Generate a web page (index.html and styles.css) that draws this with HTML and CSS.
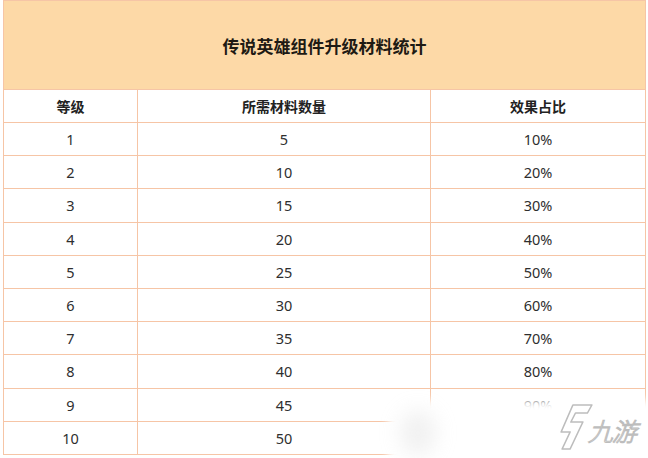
FILE: index.html
```html
<!DOCTYPE html>
<html lang="zh">
<head>
<meta charset="utf-8">
<link rel="stylesheet" href="styles.css">
</head>
<body>
<div class="wrap">
<table class="stats">
  <colgroup><col class="c1"><col class="c2"><col class="c3"></colgroup>
  <thead>
    <tr><th colspan="3" class="title">传说英雄组件升级材料统计</th></tr>
    <tr class="head"><th>等级</th><th>所需材料数量</th><th>效果占比</th></tr>
  </thead>
  <tbody>
    <tr><td>1</td><td>5</td><td>10%</td></tr>
    <tr><td>2</td><td>10</td><td>20%</td></tr>
    <tr><td>3</td><td>15</td><td>30%</td></tr>
    <tr><td>4</td><td>20</td><td>40%</td></tr>
    <tr><td>5</td><td>25</td><td>50%</td></tr>
    <tr><td>6</td><td>30</td><td>60%</td></tr>
    <tr><td>7</td><td>35</td><td>70%</td></tr>
    <tr><td>8</td><td>40</td><td>80%</td></tr>
    <tr><td>9</td><td>45</td><td>90%</td></tr>
    <tr><td>10</td><td>50</td><td>100%</td></tr>
  </tbody>
</table>
<div class="patch"></div>
<div class="shade"></div>
<div class="mark">
  <svg class="logo" width="30" height="50" viewBox="0 0 30 50">
    <path d="M9 3 L28 3 L25 11 L13 11 L10 20 L22 20 L14 47 L6 47 L11 30 L2 30 Z" fill="#ffffff" stroke="#bdbdbd" stroke-width="1.6" stroke-linejoin="round"/>
  </svg>
  <span class="brand">九游</span>
</div>
</div>
</body>
</html>
```
FILE: styles.css
```css
html, body {
  margin: 0;
  padding: 0;
  background: #ffffff;
}
.wrap {
  position: relative;
  width: 648px;
  height: 458px;
  overflow: hidden;
}
.stats {
  margin-left: 3px;
  width: 642px;
  border-collapse: collapse;
  table-layout: fixed;
  font-family: "Noto Sans", "Noto Sans CJK SC", sans-serif;
  color: #222;
}
.c1 { width: 134px; }
.c2 { width: 293px; }
.c3 { width: 215px; }
.stats th, .stats td {
  border: 1px solid #f6c5a6;
  text-align: center;
  padding: 0;
}
.title {
  height: 88px;
  background: #fdd9a7;
  font-family: "Noto Sans CJK SC", sans-serif;
  font-size: 17px;
  font-weight: 700;
  color: #1e1a14;
}
.head th {
  height: 32px;
  font-family: "Noto Sans CJK SC", sans-serif;
  font-size: 14px;
  font-weight: 700;
  color: #222;
}
.stats td {
  height: 32.2px;
  font-size: 14.5px;
  color: #2e2e2e;
}
.patch {
  position: absolute;
  left: 388px;
  top: 400px;
  width: 300px;
  height: 80px;
  background: #ffffff;
  filter: blur(4px);
}
.shade {
  position: absolute;
  left: 400px;
  top: 410px;
  width: 36px;
  height: 46px;
  border-radius: 50%;
  background: rgba(205,205,205,0.28);
  filter: blur(10px);
}
.mark {
  position: absolute;
  left: 560px;
  top: 402px;
  display: flex;
  align-items: center;
  gap: 1px;
}
.logo {
  transform: skewX(-10deg);
}
.brand {
  font-family: "Noto Sans CJK SC", sans-serif;
  font-size: 25px;
  font-weight: 300;
  color: #ffffff;
  -webkit-text-stroke: 1.1px #bdbdbd;
  transform: skewX(-16deg);
  display: inline-block;
  letter-spacing: -1px;
  margin-top: 6px;
}
```
